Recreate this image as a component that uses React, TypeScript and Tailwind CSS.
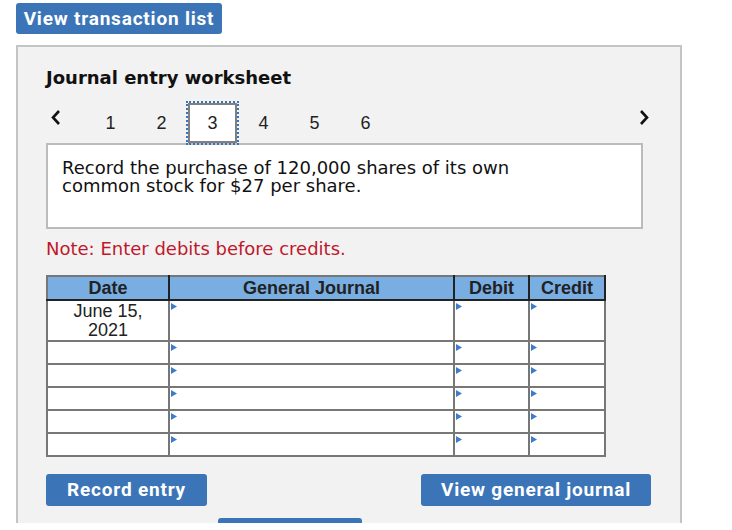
import React from "react";

const BLUE = "bg-[#3c75b7]";

function Tri() {
  return (
    <svg className="absolute left-[1px] top-[2px]" width="6" height="7" viewBox="0 0 6 7">
      <polygon points="0,0 6,3.5 0,7" fill="#3d7cc9" />
    </svg>
  );
}

function Chevron({ dir }: { dir: "left" | "right" }) {
  return (
    <svg width="12" height="17" viewBox="0 0 12 17">
      {dir === "left" ? (
        <polyline points="9,2 3,8.5 9,15" fill="none" stroke="#111" strokeWidth="2.6" />
      ) : (
        <polyline points="3,2 9,8.5 3,15" fill="none" stroke="#111" strokeWidth="2.6" />
      )}
    </svg>
  );
}

export default function App() {
  const nums = [1, 2, 3, 4, 5, 6];
  const rows = [0, 1, 2, 3, 4];
  const verdana = { fontFamily: '"DejaVu Sans", Verdana, sans-serif' };
  const arial = { fontFamily: '"Liberation Sans", Arial, sans-serif' };
  const btn = { fontFamily: 'Roboto, "Liberation Sans", sans-serif' };
  return (
    <div className="w-[732px] h-[530px] bg-white">
      <div className="h-[523px] overflow-hidden flex flex-col">
        <div className="pt-[3px] pl-[16px]">
          <button
            className={`${BLUE} h-[31px] w-[206px] pt-[2px] rounded-[3px] text-white text-[19px] font-bold tracking-[0.8px]`}
            style={btn}
          >
            View transaction list
          </button>
        </div>
        <div className="ml-[16px] mt-[11px] w-[666px] flex-1 border-2 border-b-0 border-[#c4c4c4] bg-[#f2f2f2] pl-[28px] flex flex-col">
          <div className="mt-[21px] text-[18px] font-bold text-[#111] leading-[20px]" style={verdana}>
            Journal entry worksheet
          </div>
          <div className="mt-[15px] relative z-10 flex items-center w-[604px]" style={arial}>
            <div className="w-[39px] h-[40px] flex items-center pl-[4px] pb-[12px]">
              <Chevron dir="left" />
            </div>
            {nums.map((n) =>
              n === 3 ? (
                <div
                  key={n}
                  className="mx-[1px] w-[49px] h-[40px] bg-white border-2 border-[#808080] outline-2 outline-dotted outline-[#3c75b7] flex items-center justify-center text-[18px] text-[#222]"
                >
                  {n}
                </div>
              ) : (
                <div key={n} className="w-[51px] h-[40px] flex items-center justify-center text-[18px] text-[#222]">
                  {n}
                </div>
              )
            )}
            <div className="ml-auto h-[40px] flex items-center pb-[12px]">
              <Chevron dir="right" />
            </div>
          </div>
          <div
            className="w-[597px] h-[86px] bg-white border-2 border-[#bbbbbb] px-[14px] pt-[14px] text-[18px] leading-[18px] text-[#111]"
            style={verdana}
          >
            <p className="w-[470px]">
              Record the purchase of 120,000 shares of its own common stock for $27 per share.
            </p>
          </div>
          <div className="mt-[10px] text-[18px] leading-[20px] text-[#c0182b]" style={verdana}>
            Note: Enter debits before credits.
          </div>
          <table
            className="mt-[16px] w-[558px] table-fixed border-collapse border-2 border-[#777] text-[18px] text-[#222]"
            style={arial}
          >
            <colgroup>
              <col className="w-[122px]" />
              <col className="w-[285px]" />
              <col className="w-[75px]" />
              <col className="w-[76px]" />
            </colgroup>
            <thead>
              <tr className="bg-[#79aee2] h-[24px]">
                <th className="border-2 border-[#777] border-r-[#222] border-b-[#222] font-bold leading-[20px] p-0">Date</th>
                <th className="border-2 border-[#777] border-r-[#222] border-b-[#222] font-bold leading-[20px] p-0">General Journal</th>
                <th className="border-2 border-[#777] border-r-[#222] border-b-[#222] font-bold leading-[20px] p-0">Debit</th>
                <th className="border-2 border-[#777] border-r-[#222] border-b-[#222] font-bold leading-[20px] p-0">Credit</th>
              </tr>
            </thead>
            <tbody className="bg-white">
              <tr className="h-[41px]">
                <td className="border-2 border-[#777] text-center align-top leading-[19px] p-0 pt-[1px]">
                  June 15,
                  <br />
                  2021
                </td>
                <td className="border-2 border-[#777] relative p-0"><Tri /></td>
                <td className="border-2 border-[#777] relative p-0"><Tri /></td>
                <td className="border-2 border-[#777] relative p-0"><Tri /></td>
              </tr>
              {rows.map((r) => (
                <tr key={r} className="h-[23px]">
                  <td className="border-2 border-[#777] p-0"></td>
                  <td className="border-2 border-[#777] relative p-0"><Tri /></td>
                  <td className="border-2 border-[#777] relative p-0"><Tri /></td>
                  <td className="border-2 border-[#777] relative p-0"><Tri /></td>
                </tr>
              ))}
            </tbody>
          </table>
          <div className="mt-[17px] w-[605px] flex justify-between" style={btn}>
            <button className={`${BLUE} w-[161px] h-[32px] pt-[1px] rounded-[3px] text-white text-[19px] font-bold tracking-[0.8px]`}>
              Record entry
            </button>
            <button className={`${BLUE} w-[230px] h-[32px] pt-[1px] rounded-[3px] text-white text-[19px] font-bold tracking-[0.8px]`}>
              View general journal
            </button>
          </div>
          <div className="mt-[12px] ml-[172px] w-[144px] h-[30px] shrink-0 bg-[#3c75b7] rounded-[3px]"></div>
        </div>
      </div>
    </div>
  );
}
